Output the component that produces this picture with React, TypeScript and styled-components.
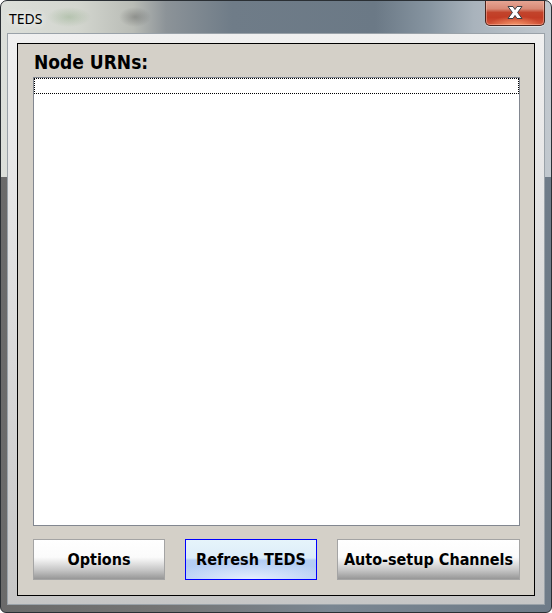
import React from "react";
import styled, { createGlobalStyle } from "styled-components";

const Global = createGlobalStyle`
  html, body { margin: 0; padding: 0; background: #ffffff; }
  body { width: 552px; height: 613px; overflow: hidden; }
  * { box-sizing: border-box; }
`;

const Window = styled.div`
  width: 552px;
  height: 613px;
  border: 1px solid #2a2f34;
  border-radius: 7px 7px 6px 6px;
  display: flex;
  flex-direction: column;
  overflow: hidden;
  background:
    radial-gradient(ellipse 22px 10px at 68px 16px, rgba(110, 150, 100, 0.3), transparent),
    radial-gradient(ellipse 16px 10px at 134px 16px, rgba(50, 50, 50, 0.3), transparent),
    linear-gradient(to right, #dcdfda 0%, #d3d6cf 14%, #b9bcb6 24%, #8c9398 30%, #6f7c88 42%, #6b7986 68%, #8795a1 78%, #a9b3bc 86%, #c2c9cf 100%) top / 100% 176px no-repeat,
    linear-gradient(to right, #6a6a6a 0%, #757575 30%, #7a8692 60%, #6e7b88 100%);
`;

const TitleBar = styled.div`
  height: 32px;
  display: flex;
  align-items: flex-start;
  padding-left: 8px;
`;

const Title = styled.span`
  margin-top: 8px;
  font-family: "Noto Sans", "Open Sans", sans-serif;
  font-size: 14px;
  line-height: 19px;
  color: #000;
  text-shadow: 0 0 6px rgba(255, 255, 255, 0.9), 0 0 10px rgba(255, 255, 255, 0.6);
`;

const CloseButton = styled.div`
  margin-left: auto;
  margin-top: -1px;
  margin-right: 6px;
  width: 60px;
  height: 26px;
  border: 1px solid #4a241c;
  border-top: none;
  border-radius: 0 0 5px 5px;
  display: flex;
  align-items: center;
  justify-content: center;
  box-shadow: inset 0 0 0 1px rgba(255, 200, 185, 0.45), 0 1px 0 rgba(255, 255, 255, 0.5);
  background:
    radial-gradient(ellipse 26px 9px at 50% 100%, rgba(255, 170, 120, 0.75), transparent),
    linear-gradient(to bottom, #e7a897 0%, #d88a76 35%, #c2432b 50%, #c23c25 70%, #d4573b 100%);
`;

const Frame = styled.div`
  flex: 1;
  display: flex;
  padding: 0 6px 7px 6px;
`;

const Client = styled.div`
  flex: 1;
  display: flex;
  border: 1px solid #9aa2a9;
  background: linear-gradient(to bottom, #f0f0f0 0%, #dcdcdc 50%, #c6c6c6 100%);
  padding: 9px 9px 8px 9px;
`;

const Panel = styled.div`
  flex: 1;
  display: flex;
  flex-direction: column;
  border: 1px solid #000;
  background: #d4d0c8;
  padding: 7px 14px 15px 15px;
`;

const Label = styled.div`
  font-family: "DejaVu Sans Condensed", "DejaVu Sans", sans-serif;
  font-weight: bold;
  font-size: 19px;
  line-height: 22px;
  color: #000;
  padding-left: 1px;
  margin-bottom: 4px;
`;

const ListBox = styled.div`
  flex: 1;
  background: #fff;
  border: 1px solid #828790;
  margin-bottom: 13px;
`;

const FocusRow = styled.div`
  height: 16px;
  border: 1px dotted #000;
`;

const ButtonRow = styled.div`
  display: flex;
  gap: 20px;
`;

const Button = styled.div<{ $width: number; $focused?: boolean }>`
  width: ${(p) => p.$width}px;
  height: 41px;
  display: flex;
  align-items: center;
  justify-content: center;
  font-family: "DejaVu Sans Condensed", "DejaVu Sans", sans-serif;
  font-weight: bold;
  font-size: 16px;
  color: #000;
  border: 1px solid ${(p) => (p.$focused ? "#0000ff" : "#a4a4a4")};
  background: ${(p) =>
    p.$focused
      ? "radial-gradient(ellipse 70% 45% at 50% 100%, rgba(235, 242, 255, 0.9), transparent), linear-gradient(to bottom, #e6f4fb 0%, #dcedf9 46%, #b4cdf4 52%, #b0caf3 100%)"
      : "linear-gradient(to bottom, #ffffff 0%, #fbfbfb 44%, #ececec 54%, #c4c4c4 78%, #979797 100%)"};
`;

const CloseGlyph = () => (
  <svg width="18" height="15" viewBox="0 0 18 15">
    <path
      d="M2 1.5 L7 1.5 L9 4.5 L11 1.5 L16 1.5 L11.6 7.5 L16 13.5 L11 13.5 L9 10.5 L7 13.5 L2 13.5 L6.4 7.5 Z"
      fill="#ffffff"
      stroke="#3b3f44"
      strokeWidth="1"
      strokeLinejoin="round"
    />
  </svg>
);

export default function App() {
  return (
    <>
      <Global />
      <Window>
        <TitleBar>
          <Title>TEDS</Title>
          <CloseButton>
            <CloseGlyph />
          </CloseButton>
        </TitleBar>
        <Frame>
          <Client>
            <Panel>
              <Label>Node URNs:</Label>
              <ListBox>
                <FocusRow />
              </ListBox>
              <ButtonRow>
                <Button $width={132}>Options</Button>
                <Button $width={132} $focused>
                  Refresh TEDS
                </Button>
                <Button $width={183}>Auto-setup Channels</Button>
              </ButtonRow>
            </Panel>
          </Client>
        </Frame>
      </Window>
    </>
  );
}
